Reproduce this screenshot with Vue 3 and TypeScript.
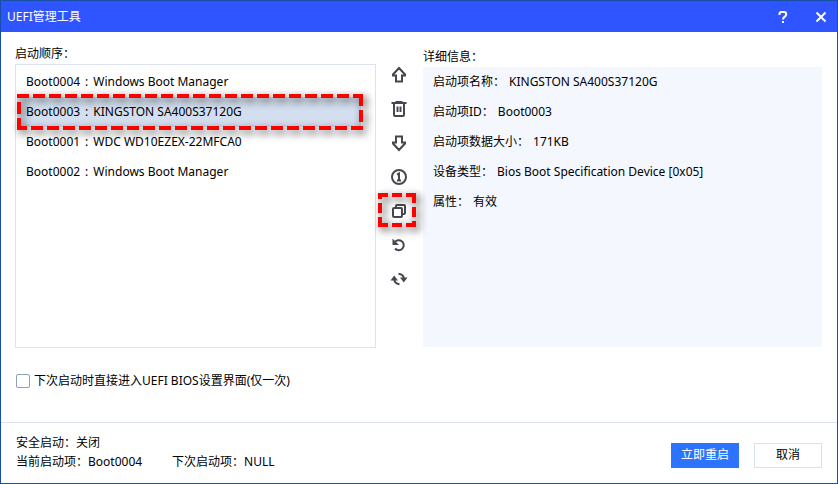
<script setup lang="ts">
import { ref } from 'vue'

interface BootEntry {
  id: string
  name: string
}

const entries: BootEntry[] = [
  { id: 'Boot0004', name: 'Windows Boot Manager' },
  { id: 'Boot0003', name: 'KINGSTON SA400S37120G' },
  { id: 'Boot0001', name: 'WDC WD10EZEX-22MFCA0' },
  { id: 'Boot0002', name: 'Windows Boot Manager' },
]

const details = [
  { label: '启动项名称', value: 'KINGSTON SA400S37120G' },
  { label: '启动项ID', value: 'Boot0003' },
  { label: '启动项数据大小', value: '171KB' },
  { label: '设备类型', value: 'Bios Boot Specification Device [0x05]' },
  { label: '属性', value: '有效' },
]

const selected = ref('Boot0003')
const enterSetup = ref(false)
</script>

<template>
  <main class="window">
    <header class="titlebar">
      <h1>UEFI管理工具</h1>
      <button class="winbtn" type="button">
        <svg width="12" height="14" viewBox="0 0 12 14" fill="none" stroke="currentColor" stroke-width="2">
          <path d="M2.5 5V4Q2.5 2 4.5 2H7Q9.2 2 9.2 4V4.6Q9.2 5.8 8 6.5Q6 7.6 6 9.5M6 11V13" />
        </svg>
      </button>
      <button class="winbtn" type="button">
        <svg width="12" height="12" viewBox="0 0 12 12" fill="none" stroke="currentColor" stroke-width="2">
          <path d="M1.5 1.5L10.5 10.5M10.5 1.5L1.5 10.5" />
        </svg>
      </button>
    </header>

    <div class="content">
      <section class="order">
        <h2>启动顺序：</h2>
        <ul class="list">
          <li v-for="e in entries" :key="e.id">
            <button class="entry" type="button" :class="{ active: e.id === selected }" @click="selected = e.id">
              <span>{{ e.id }}</span><span>:</span><span>{{ e.name }}</span>
            </button>
            <svg v-if="e.id === 'Boot0003'" class="mark wide" width="346" height="36" viewBox="0 0 346 36">
              <path d="M0 2H346M344 0V36M346 34H0M2 36V8" />
            </svg>
          </li>
        </ul>
      </section>

      <nav class="tools">
        <button type="button">
          <svg viewBox="0 0 18 18"><path d="M9 2L15 8.5V9.5H12V15.5H6V9.5H3V8.5Z" /></svg>
        </button>
        <button type="button">
          <svg viewBox="0 0 18 18"><path d="M1.5 3H16.5M5.5 2H12.5M4 3V15Q4 16 5 16H13Q14 16 14 15V3M7.5 6.5V12M10.5 6.5V12" /></svg>
        </button>
        <button type="button">
          <svg viewBox="0 0 18 18"><path d="M9 16L3 9.5V8.5H6V2.5H12V8.5H15V9.5Z" /></svg>
        </button>
        <button type="button">
          <svg viewBox="0 0 18 18"><circle cx="9" cy="9" r="7" /><path d="M7 6.7L9 5.5V12.5M7 12.5H11" /></svg>
        </button>
        <button type="button">
          <svg viewBox="0 0 18 18"><rect x="3" y="6" width="9" height="9" rx="1" /><path d="M6 6V4Q6 3 7 3H14Q15 3 15 4V11Q15 12 14 12H12" /></svg>
          <svg class="mark small" width="38" height="34" viewBox="0 0 38 34">
            <path d="M0 2H38M36 0V34M38 32H0M2 34V4" />
          </svg>
        </button>
        <button type="button">
          <svg viewBox="0 0 18 18"><path d="M4.5 6.5A5 5 0 1 1 5 12.5" /><path class="solid" d="M2.5 2.5V9H9Z" /></svg>
        </button>
        <button type="button">
          <svg viewBox="0 0 18 18"><path d="M4.2 9Q4.2 13.5 9.5 14.2M13.8 9Q13.8 4.5 8.5 3.8" /><path class="solid" d="M0.5 10.5H8L4.2 5.5ZM17.5 7.5H10L13.8 12.5Z" /></svg>
        </button>
      </nav>

      <section class="info">
        <h2>详细信息：</h2>
        <dl class="panel">
          <div v-for="d in details" :key="d.label">
            <dt>{{ d.label }}：</dt>
            <dd>{{ d.value }}</dd>
          </div>
        </dl>
      </section>
    </div>

    <label class="check">
      <input v-model="enterSetup" type="checkbox" />
      <span>下次启动时直接进入UEFI BIOS设置界面(仅一次)</span>
    </label>

    <footer class="footer">
      <div class="status">
        <p>安全启动：关闭</p>
        <p><span>当前启动项：Boot0004</span><span>下次启动项：NULL</span></p>
      </div>
      <div class="actions">
        <button class="btn primary" type="button">立即重启</button>
        <button class="btn" type="button">取消</button>
      </div>
    </footer>
  </main>
</template>

<style>
body {
  margin: 0;
}
</style>

<style scoped>
.window {
  box-sizing: border-box;
  min-height: 100vh;
  display: flex;
  flex-direction: column;
  border: 1px solid #174ea6;
  background: #fff;
  color: #000;
  font: 12px/20px "Noto Sans", "Noto Sans CJK SC", sans-serif;
}
button {
  font: inherit;
  color: inherit;
  padding: 0;
  border: 0;
  background: none;
}
h1, h2, ul, dl, dd, p {
  margin: 0;
  padding: 0;
  font-size: 12px;
  font-weight: 400;
  list-style: none;
}
.titlebar {
  height: 31px;
  display: flex;
  align-items: center;
  gap: 14px;
  padding: 0 4px 0 6px;
  background: #2e55ff;
  color: #fff;
}
.titlebar h1 {
  flex: 1;
}
.winbtn {
  width: 24px;
  height: 24px;
  display: grid;
  place-items: center;
}
.content {
  flex: 1;
  display: grid;
  grid-template-columns: 361fr 47px 399fr;
  padding: 12px 15px 0 14px;
}
.order {
  display: flex;
  flex-direction: column;
}
.list {
  flex: 1;
  border: 1px solid #dce2f2;
  padding: 2px 14px 2px 1px;
}
.list li {
  position: relative;
}
.entry {
  width: 100%;
  height: 30px;
  display: flex;
  align-items: center;
  gap: 5px;
  padding: 0 9px;
  text-align: left;
}
.entry.active {
  background: #d3dfef;
}
.mark {
  position: absolute;
  overflow: visible;
  fill: none;
  stroke: #f00;
  stroke-width: 4;
  stroke-dasharray: 12 4;
  filter: drop-shadow(3px 3px 4px rgba(0, 0, 0, 0.75));
  pointer-events: none;
}
.wide {
  left: 0;
  top: -3px;
}
.tools {
  display: flex;
  flex-direction: column;
  align-items: center;
  gap: 16px;
  padding: 22px 2px 0 0;
}
.tools button {
  position: relative;
  height: 18px;
}
.tools svg:not(.mark) {
  width: 18px;
  height: 18px;
  display: block;
  fill: none;
  stroke: #45494f;
  stroke-width: 2;
}
.tools svg .solid {
  fill: #45494f;
  stroke: none;
}
.small {
  left: -12px;
  top: -9px;
  stroke-dasharray: 10 4;
}
.info {
  display: flex;
  flex-direction: column;
  padding: 3px 0 1px;
}
.panel {
  flex: 1;
  background: #f4f8fe;
  padding: 0 10px;
}
.panel div {
  display: flex;
  gap: 4px;
  line-height: 30px;
}
.check {
  display: flex;
  align-items: center;
  gap: 4px;
  align-self: flex-start;
  margin: 23px 15px 31px;
}
.check input {
  appearance: none;
  box-sizing: border-box;
  width: 14px;
  height: 14px;
  margin: 0;
  border: 1px solid #8f9ebd;
  border-radius: 2px;
  background: #fff;
}
.footer {
  display: flex;
  align-items: center;
  padding: 10px 15px 12px;
  border-top: 1px solid #dce2f2;
}
.status {
  flex: 1;
  line-height: 19px;
}
.status p {
  display: flex;
  gap: 30px;
}
.actions {
  display: flex;
  gap: 15px;
  padding-top: 6px;
}
.btn {
  box-sizing: border-box;
  width: 68px;
  height: 25px;
  border: 1px solid #dbe1ea;
  background: #fff;
}
.primary {
  border-color: #2d73ff;
  background: #2d73ff;
  color: #fff;
}
</style>
